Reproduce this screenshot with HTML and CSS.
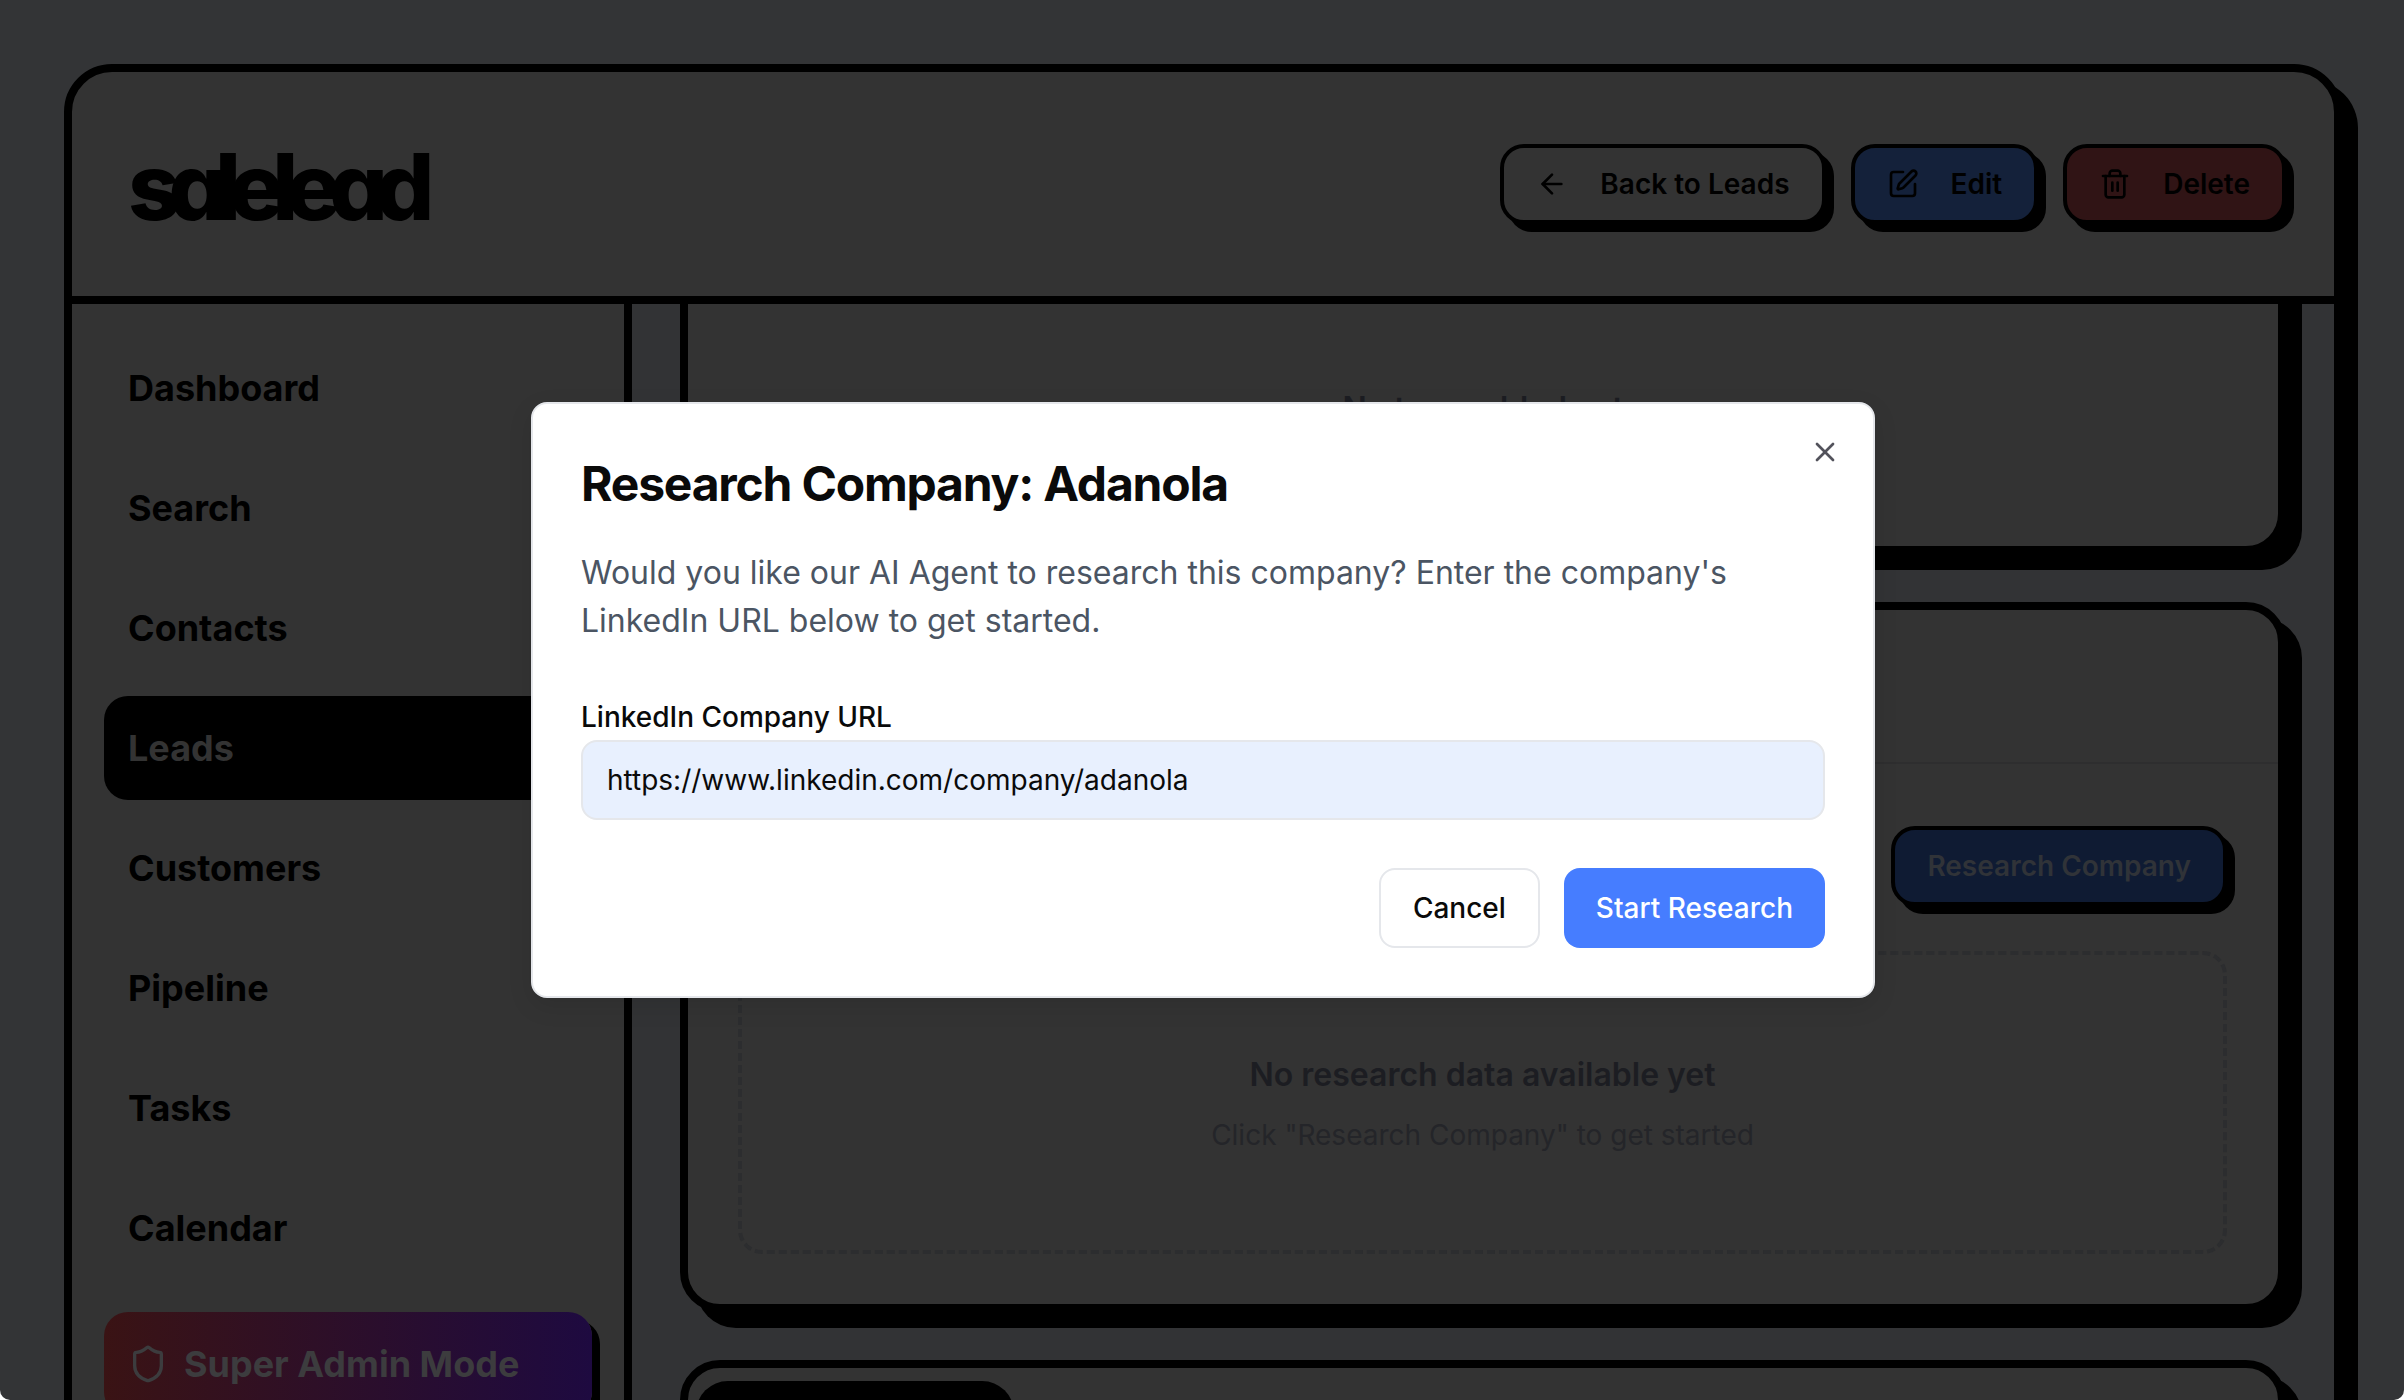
FILE: index.html
```html
<!DOCTYPE html>
<html lang="en">
<head>
<meta charset="utf-8">
<title>salelead</title>
<link rel="stylesheet" href="styles.css">
</head>
<body>
<div class="screen">
  <div class="frame">
    <header class="topbar">
      <div class="logo">salelead</div>
      <div class="actions">
        <button class="btn">
          <svg class="icon" viewBox="0 0 24 24"><path d="m12 19-7-7 7-7"/><path d="M19 12H5"/></svg>
          <span>Back to Leads</span>
        </button>
        <button class="btn btn-blue">
          <svg class="icon" viewBox="0 0 24 24"><path d="M12 3H5a2 2 0 0 0-2 2v14a2 2 0 0 0 2 2h14a2 2 0 0 0 2-2v-7"/><path d="M18.375 2.625a1 1 0 0 1 3 3l-9.013 9.014a2 2 0 0 1-.853.505l-2.873.84a.5.5 0 0 1-.62-.62l.84-2.873a2 2 0 0 1 .506-.852z"/></svg>
          <span>Edit</span>
        </button>
        <button class="btn btn-red">
          <svg class="icon" viewBox="0 0 24 24"><path d="M3 6h18"/><path d="M19 6v14c0 1-1 2-2 2H7c-1 0-2-1-2-2V6"/><path d="M8 6V4c0-1 1-2 2-2h4c1 0 2 1 2 2v2"/><path d="M10 11v6"/><path d="M14 11v6"/></svg>
          <span>Delete</span>
        </button>
      </div>
    </header>
    <div class="body">
      <aside class="sidebar">
        <a class="nav">Dashboard</a>
        <a class="nav">Search</a>
        <a class="nav">Contacts</a>
        <a class="nav nav-active">Leads</a>
        <a class="nav">Customers</a>
        <a class="nav">Pipeline</a>
        <a class="nav">Tasks</a>
        <a class="nav">Calendar</a>
        <a class="nav nav-admin">
          <svg class="shield" viewBox="0 0 24 24"><path d="M20 13c0 5-3.5 7.5-7.66 8.95a1 1 0 0 1-.67-.01C7.5 20.5 4 18 4 13V6a1 1 0 0 1 1-1c2 0 4.5-1.2 6.24-2.72a1.17 1.17 0 0 1 1.52 0C14.51 3.81 17 5 19 5a1 1 0 0 1 1 1z"/></svg>
          <span>Super Admin Mode</span>
        </a>
      </aside>
      <main class="main">
        <section class="card card-cut">
          <p class="empty-title">No tags added yet</p>
        </section>
        <section class="card card-research">
          <div class="card-head"></div>
          <div class="card-body">
            <div class="research-bar">
              <button class="btn btn-primary-dim">Research Company</button>
            </div>
            <div class="dashed">
              <p class="empty-title">No research data available yet</p>
              <p class="empty-sub">Click "Research Company" to get started</p>
            </div>
          </div>
        </section>
        <section class="card card-last">
          <div class="tab-block"></div>
        </section>
      </main>
    </div>
  </div>
  <div class="modal" role="dialog">
    <svg class="close" viewBox="0 0 24 24"><path d="M18 6 6 18"/><path d="m6 6 12 12"/></svg>
    <h2 class="modal-title">Research Company: Adanola</h2>
    <p class="modal-desc">Would you like our AI Agent to research this company? Enter the company's LinkedIn URL below to get started.</p>
    <label class="field-label" for="url">LinkedIn Company URL</label>
    <input class="field" id="url" type="text" value="https://www.linkedin.com/company/adanola">
    <div class="modal-actions">
      <button class="mbtn">Cancel</button>
      <button class="mbtn mbtn-primary">Start Research</button>
    </div>
  </div>
</div>
</body>
</html>
```
FILE: styles.css
```css
* { box-sizing: border-box; }
html { background: #fff; }
body {
  margin: 0;
  font-family: Inter, "Liberation Sans", sans-serif;
  color: #000;
}
p, h2 { margin: 0; }

.screen {
  position: relative;
  height: 1400px;
  overflow: hidden;
  padding: 64px 62px 0 64px;
  background: #333436;
  border-radius: 0 0 10px 10px;
}

.frame {
  height: 1400px;
  border: 8px solid #000;
  border-radius: 48px;
  background: #333;
  box-shadow: 16px 16px 0 #000;
  display: flex;
  flex-direction: column;
}

.topbar {
  flex: none;
  height: 232px;
  border-bottom: 8px solid #000;
  padding: 0 48px 0 56px;
  display: flex;
  align-items: center;
  justify-content: space-between;
}

.logo {
  margin-top: 6px;
  font-size: 92px;
  font-weight: 760;
  line-height: 1;
  letter-spacing: -0.132em;
  font-feature-settings: "cv11";
  color: #000;
}

.actions { display: flex; gap: 25px; }

.btn {
  height: 80px;
  padding: 0 32px;
  border: 4px solid #000;
  border-radius: 24px;
  background: #333;
  box-shadow: 8px 8px 0 #000;
  color: #000;
  font: 630 28px/40px Inter, sans-serif;
  display: flex;
  align-items: center;
  gap: 32px;
}
.btn-blue { background: #14213a; }
.btn-red { background: #301415; }
.btn-primary-dim { background: #0f1b33; color: #303338; }

.icon {
  width: 32px;
  height: 32px;
  fill: none;
  stroke: #000;
  stroke-width: 2;
  stroke-linecap: round;
  stroke-linejoin: round;
}

.body { flex: 1; min-height: 0; display: flex; }

.sidebar {
  flex: none;
  width: 560px;
  border-right: 8px solid #000;
  padding: 32px;
  display: flex;
  flex-direction: column;
  gap: 16px;
}

.nav {
  flex: none;
  height: 104px;
  padding: 24px;
  border-radius: 24px;
  font-size: 36px;
  font-weight: 650;
  line-height: 56px;
  color: #000;
  display: flex;
  align-items: center;
  gap: 16px;
}
.nav-active { background: #000; color: #333; }
.nav-admin {
  margin-top: 16px;
  color: #3c3c3e;
  background: linear-gradient(90deg, #3a1314, #1e0a40);
  box-shadow: 8px 8px 0 #000;
}

.shield {
  width: 40px;
  height: 40px;
  fill: none;
  stroke: #3c3c3e;
  stroke-width: 2;
  stroke-linecap: round;
  stroke-linejoin: round;
}

.main {
  flex: 1;
  min-width: 0;
  padding: 0 48px;
  background: #323335;
  display: flex;
  flex-direction: column;
  gap: 48px;
  overflow: hidden;
}

.card {
  flex: none;
  border: 8px solid #000;
  border-radius: 40px;
  background: #333;
  box-shadow: 16px 16px 0 #000;
}
.card-cut {
  height: 350px;
  margin-top: -100px;
  padding-top: 173px;
  text-align: center;
}
.card-research { height: 710px; }
.card-head { height: 154px; border-bottom: 2px solid #2e2e2f; }
.card-body { padding: 62px 51px 0 50px; }
.research-bar { display: flex; justify-content: flex-end; }

.dashed {
  margin-top: 45px;
  padding: 96px 0 95px;
  border: 4px dashed #2c2d2f;
  border-radius: 24px;
  text-align: center;
}
.empty-title {
  font-size: 32px;
  font-weight: 620;
  line-height: 48px;
  color: #1c1d22;
}
.empty-sub {
  margin-top: 16px;
  font-size: 28px;
  line-height: 40px;
  color: #242529;
}

.card-last { height: 400px; padding: 13px 8px; }
.tab-block { width: 318px; height: 200px; background: #000; border-radius: 32px; }

.modal {
  position: absolute;
  left: 531px;
  top: 402px;
  width: 1344px;
  height: 596px;
  padding: 48px;
  background: #fff;
  border: 2px solid #e5e7eb;
  border-radius: 16px;
  box-shadow: 0 8px 24px rgba(0, 0, 0, 0.1);
}
.close {
  position: absolute;
  right: 32px;
  top: 32px;
  width: 32px;
  height: 32px;
  fill: none;
  stroke: #52525b;
  stroke-width: 2;
  stroke-linecap: round;
  stroke-linejoin: round;
}
.modal-title {
  font-size: 48px;
  font-weight: 650;
  line-height: 64px;
  letter-spacing: -0.025em;
  color: #0a0a0a;
}
.modal-desc {
  margin-top: 33px;
  font-size: 32px;
  line-height: 48px;
  color: #4b5563;
}
.field-label {
  display: block;
  margin-top: 52px;
  font-size: 28px;
  font-weight: 500;
  line-height: 40px;
  color: #0a0a0a;
}
.field {
  display: block;
  width: 100%;
  height: 80px;
  margin-top: 3px;
  padding: 0 24px;
  border: 2px solid #e5e7eb;
  border-radius: 16px;
  background: #e8f0fe;
  font: 400 28px Inter, sans-serif;
  color: #0a0a0a;
}
.modal-actions {
  display: flex;
  justify-content: flex-end;
  gap: 24px;
  margin-top: 48px;
}
.mbtn {
  height: 80px;
  padding: 0 32px;
  border: 2px solid #e5e7eb;
  border-radius: 16px;
  background: #fff;
  color: #0a0a0a;
  font: 500 28px/40px Inter, sans-serif;
}
.mbtn-primary { background: #467dff; border: 0; color: #fff; }
```
